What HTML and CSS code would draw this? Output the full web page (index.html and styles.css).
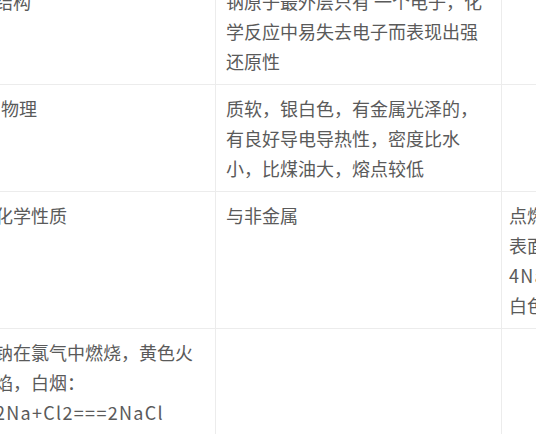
FILE: index.html
```html
<!doctype html>
<html>
<head>
<meta charset="utf-8">
<title>钠的性质</title>
<link rel="stylesheet" href="styles.css">
</head>
<body>
<div class="wrap">
	<table class="tb">
		<tr>
			<td class="c1">结构</td>
			<td class="c2">钠原子最外层只有&nbsp;一个电子，化<br>学反应中易失去电子而表现出强<br>还原性</td>
			<td class="c3"></td>
		</tr>
		<tr>
			<td class="c1"><span class="ind">物理</span></td>
			<td class="c2">质软，银白色，有金属光泽的，<br>有良好导电导热性，密度比水<br>小，比煤油大，熔点较低</td>
			<td class="c3"></td>
		</tr>
		<tr>
			<td class="c1">化学性质</td>
			<td class="c2">与非金属</td>
			<td class="c3">点燃：<span class="eq">2Na+O2===Na2O2</span><br>表面变暗：<br><span class="eq">4Na+O2===2Na2O</span><br>白色固体</td>
		</tr>
		<tr>
			<td class="c1">钠在氯气中燃烧，黄色火<br>焰，白烟：<br><span class="eq">2Na+Cl2===2NaCl</span></td>
			<td class="c2"></td>
			<td class="c3"></td>
		</tr>
	</table>
</div>
</body>
</html>
```

FILE: styles.css
```css
*{margin:0; padding:0;}
html,body{background:#fff;}
body{overflow:hidden; font-family:"Noto Sans CJK SC","Liberation Sans",sans-serif; color:#5a5a5a;}
.wrap{width:536px; height:434px; overflow:hidden;}
.tb{border-collapse:collapse; table-layout:fixed; margin:-23px 0 0 -16px; width:776px;}
.tb td{border:1px solid #ececec; padding:8px 10px; font-size:18px; line-height:30px; vertical-align:top; white-space:nowrap; overflow:hidden;}
.tb .c1{width:210px;}
.tb .c2{width:265px;}
.tb .c3{width:240px; padding-left:7px;}
.tb .ind{padding-left:6px;}
.tb .eq{letter-spacing:1.3px;}
```
